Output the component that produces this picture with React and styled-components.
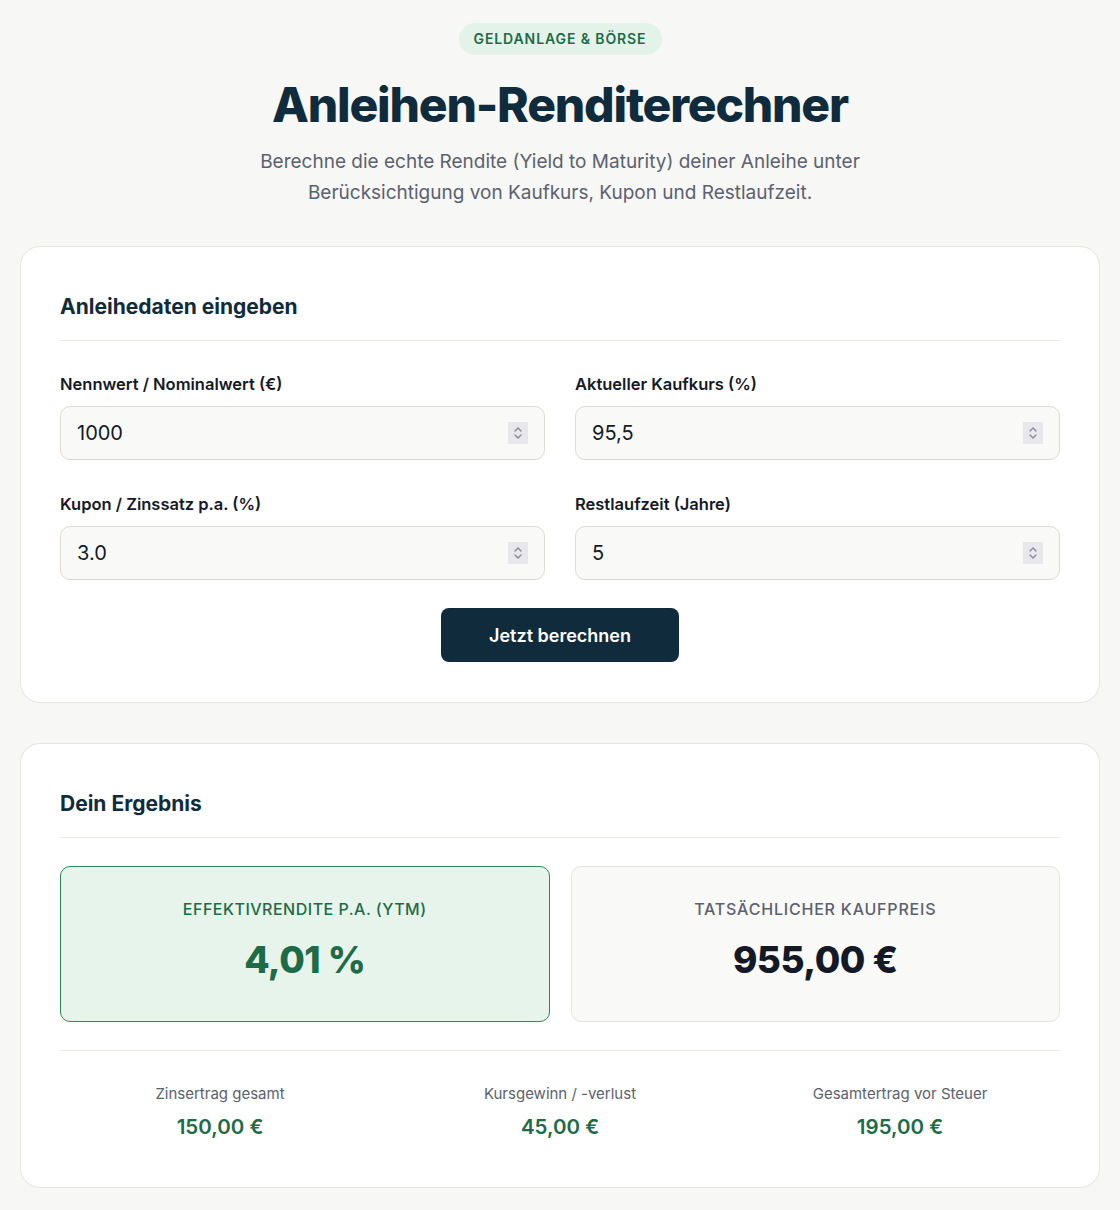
import React from 'react'
import styled, { createGlobalStyle } from 'styled-components';

const GlobalStyle = createGlobalStyle`
  * { box-sizing: border-box; }
  body {
    margin: 0;
    background: #f7f7f6;
    font-family: Inter, "Noto Sans", "Liberation Sans", sans-serif;
    color: #0f2b3c;
  }
`;

const Page = styled.div`
  padding: 23px 20px 22px;
  display: flex;
  flex-direction: column;
  align-items: center;
`;

const Badge = styled.div`
  background: #e4f3ea;
  color: #1d6b47;
  font-size: 14px;
  font-weight: 600;
  letter-spacing: 0.9px;
  padding: 0 15px;
  height: 32px;
  line-height: 32px;
  border-radius: 16px;
`;

const Title = styled.h1`
  margin: 20px 0 0;
  font-size: 48px;
  line-height: 60px;
  font-weight: 800;
  letter-spacing: -1.2px;
  color: #0f2b3c;
`;

const Subtitle = styled.p`
  margin: 11px 0 0;
  max-width: 660px;
  text-align: center;
  font-size: 19px;
  line-height: 31px;
  color: #5b6170;
`;

const Card = styled.section`
  width: 100%;
  margin-top: ${p => p.$top}px;
  background: #fff;
  border: 1px solid #e6e4de;
  border-radius: 20px;
  padding: ${p => p.$pad};
`;

const CardTitle = styled.h2`
  margin: 0;
  font-size: 21px;
  line-height: 40px;
  font-weight: 700;
  color: #0f2b3c;
  padding-bottom: 13px;
  border-bottom: 1px solid #ebe9e4;
`;

const FormGrid = styled.div`
  display: grid;
  grid-template-columns: 1fr 1fr;
  column-gap: 30px;
  row-gap: 34px;
  margin-top: 33px;
`;

const Field = styled.label`
  display: flex;
  flex-direction: column;
  gap: 12px;
`;

const Label = styled.span`
  font-size: 16.5px;
  line-height: 20px;
  font-weight: 600;
  color: #131a26;
`;

const InputBox = styled.div`
  display: flex;
  align-items: center;
  height: 54px;
  padding: 0 16px;
  background: #f9f9f7;
  border: 1px solid #dcdad3;
  border-radius: 10px;
`;

const Input = styled.input`
  flex: 1;
  min-width: 0;
  border: none;
  outline: none;
  background: transparent;
  font-family: inherit;
  font-size: 20px;
  color: #131a26;
  padding: 0;
`;

const Spinner = styled.span`
  width: 20px;
  height: 22px;
  background: #e7e7ec;
  display: flex;
  align-items: center;
  justify-content: center;
`;

const ButtonRow = styled.div`
  display: flex;
  justify-content: center;
  margin-top: 28px;
`;

const Button = styled.button`
  width: 238px;
  height: 54px;
  border: none;
  border-radius: 8px;
  background: #0f2b3c;
  color: #fff;
  font-family: inherit;
  font-size: 18px;
  font-weight: 600;
`;

const Highlights = styled.div`
  display: grid;
  grid-template-columns: 1fr 1fr;
  gap: 21px;
  margin-top: 28px;
  padding-bottom: 28px;
  border-bottom: 1px solid #ebe9e4;
`;

const Highlight = styled.div`
  height: 156px;
  border-radius: 10px;
  border: 1px solid ${p => (p.$green ? '#2a8a5a' : '#e6e4de')};
  background: ${p => (p.$green ? '#e7f4ec' : '#f9f9f7')};
  display: flex;
  flex-direction: column;
  align-items: center;
  padding-top: 32px;
`;

const HighlightLabel = styled.div`
  font-size: 16px;
  line-height: 20px;
  font-weight: 500;
  letter-spacing: ${p => (p.$green ? '0.5px' : '0.8px')};
  text-transform: uppercase;
  color: ${p => (p.$green ? '#1d6b47' : '#5b6170')};
`;

const HighlightValue = styled.div`
  margin-top: 17px;
  font-size: 37px;
  line-height: 48px;
  font-weight: 800;
  letter-spacing: -0.5px;
  color: ${p => (p.$green ? '#1d6b47' : '#131a26')};
`;

const Stats = styled.div`
  display: grid;
  grid-template-columns: repeat(3, 1fr);
  margin: 31px -10px 0;
`;

const Stat = styled.div`
  display: flex;
  flex-direction: column;
  align-items: center;
  gap: 9px;
`;

const StatLabel = styled.div`
  font-size: 15px;
  line-height: 24px;
  color: #5b6170;
`;

const StatValue = styled.div`
  font-size: 20.5px;
  line-height: 24px;
  font-weight: 600;
  color: #1d6b47;
`;

const SpinIcon = () => (
  <svg width="10" height="16" viewBox="0 0 10 16" fill="none" stroke="#8a8a96" strokeWidth="1.4" strokeLinecap="round" strokeLinejoin="round">
    <path d="M2 6 L5 3 L8 6" />
    <path d="M2 10 L5 13 L8 10" />
  </svg>
);

const fields = [
  { label: 'Nennwert / Nominalwert (€)', value: '1000' },
  { label: 'Aktueller Kaufkurs (%)', value: '95,5' },
  { label: 'Kupon / Zinssatz p.a. (%)', value: '3.0' },
  { label: 'Restlaufzeit (Jahre)', value: '5' },
];

const stats = [
  { label: 'Zinsertrag gesamt', value: '150,00 €' },
  { label: 'Kursgewinn / -verlust', value: '45,00 €' },
  { label: 'Gesamtertrag vor Steuer', value: '195,00 €' },
];

const App = () => {
  return (
    <>
      <GlobalStyle />
      <Page>
        <Badge>GELDANLAGE &amp; BÖRSE</Badge>
        <Title>Anleihen-Renditerechner</Title>
        <Subtitle>
          Berechne die echte Rendite (Yield to Maturity) deiner Anleihe unter
          Berücksichtigung von Kaufkurs, Kupon und Restlaufzeit.
        </Subtitle>

        <Card $top={38} $pad="40px 39px 40px">
          <CardTitle>Anleihedaten eingeben</CardTitle>
          <FormGrid>
            {fields.map(f => (
              <Field key={f.label}>
                <Label>{f.label}</Label>
                <InputBox>
                  <Input type="text" defaultValue={f.value} />
                  <Spinner><SpinIcon /></Spinner>
                </InputBox>
              </Field>
            ))}
          </FormGrid>
          <ButtonRow>
            <Button>Jetzt berechnen</Button>
          </ButtonRow>
        </Card>

        <Card $top={40} $pad="40px 39px 48px">
          <CardTitle>Dein Ergebnis</CardTitle>
          <Highlights>
            <Highlight $green>
              <HighlightLabel $green>Effektivrendite p.a. (YTM)</HighlightLabel>
              <HighlightValue $green>4,01 %</HighlightValue>
            </Highlight>
            <Highlight>
              <HighlightLabel>Tatsächlicher Kaufpreis</HighlightLabel>
              <HighlightValue>955,00 €</HighlightValue>
            </Highlight>
          </Highlights>
          <Stats>
            {stats.map(s => (
              <Stat key={s.label}>
                <StatLabel>{s.label}</StatLabel>
                <StatValue>{s.value}</StatValue>
              </Stat>
            ))}
          </Stats>
        </Card>
      </Page>
    </>
  )
}

export default App
